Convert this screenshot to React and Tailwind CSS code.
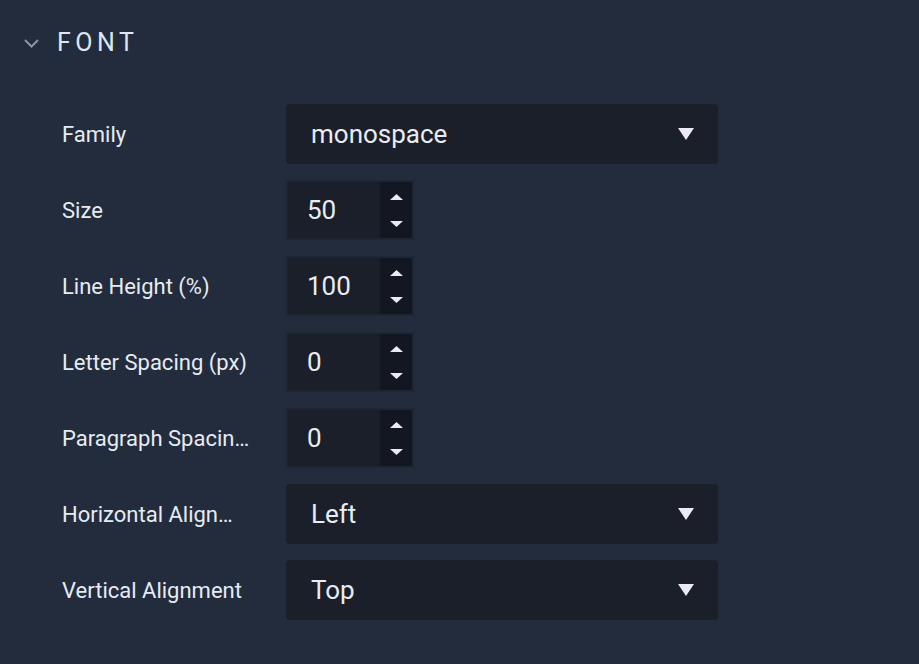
import { useState } from 'react';

const rows = [
  { label: 'Family', type: 'select', value: 'monospace' },
  { label: 'Size', type: 'number', value: '50' },
  { label: 'Line Height (%)', type: 'number', value: '100' },
  { label: 'Letter Spacing (px)', type: 'number', value: '0' },
  { label: 'Paragraph Spacing (px)', type: 'number', value: '0' },
  { label: 'Horizontal Alignment', type: 'select', value: 'Left' },
  { label: 'Vertical Alignment', type: 'select', value: 'Top' },
];

function SelectBox({ value }) {
  return (
    <div className="flex items-center justify-between w-[432px] h-[60px] rounded-[4px] bg-[#1a1f29] pl-[25px] pr-[24px]">
      <span className="text-[26px] text-[#e9ecf2]">{value}</span>
      <svg width="16" height="12" viewBox="0 0 16 12">
        <path d="M0 0 H16 L8 12 Z" fill="#eceaf2" />
      </svg>
    </div>
  );
}

function NumberBox({ value }) {
  return (
    <div className="flex w-[128px] h-[60px] border-2 border-[#1d2634] bg-[#1a1f29]">
      <div className="flex-1 flex items-center pl-[19px] text-[26px] text-[#e9ecf2]">{value}</div>
      <div className="w-[32px] bg-[#121722] flex flex-col items-center justify-center gap-[21px]">
        <svg width="13" height="6" viewBox="0 0 13 6">
          <path d="M0 6 H13 L6.5 0 Z" fill="#eceaf2" />
        </svg>
        <svg width="13" height="6" viewBox="0 0 13 6">
          <path d="M0 0 H13 L6.5 6 Z" fill="#eceaf2" />
        </svg>
      </div>
    </div>
  );
}

export default function App() {
  const [open] = useState(true);

  return (
    <div className="w-full h-screen bg-[#222c3c] overflow-hidden" style={{ fontFamily: 'Roboto, "Liberation Sans", sans-serif' }}>
      {/* Section header */}
      <div className="flex items-center h-[38px] mt-[24px]">
        <svg className="ml-[24px]" width="15" height="9" viewBox="0 0 15 9">
          <path d="M1 1 L7.5 7.5 L14 1" fill="none" stroke="#8b94a3" strokeWidth="2" />
        </svg>
        <span className="ml-[18px] text-[25px] tracking-[4.5px] text-[#dfe6ef]">FONT</span>
      </div>

      {/* Rows */}
      {open && (
        <div className="flex flex-col gap-[16px] mt-[42px] pl-[62px]">
          {rows.map((row) => (
            <div key={row.label} className="flex items-center h-[60px]">
              <div className="w-[224px] pr-[34px]">
                <div className="truncate text-[22px] text-[#e6ebf2]">{row.label}</div>
              </div>
              {row.type === 'select' ? <SelectBox value={row.value} /> : <NumberBox value={row.value} />}
            </div>
          ))}
        </div>
      )}
    </div>
  );
}
